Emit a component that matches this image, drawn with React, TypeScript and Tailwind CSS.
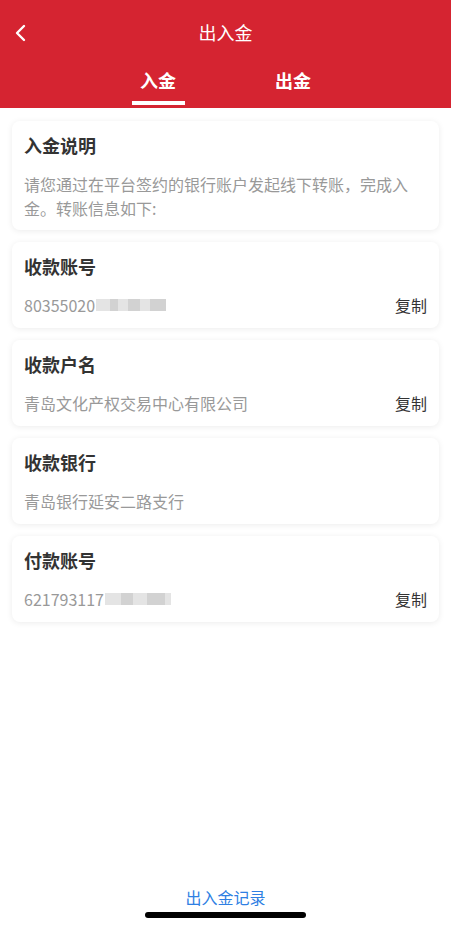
import React from 'react';

const Masked = ({ widths }: { widths: number[] }) => (
  <span className="inline-flex items-center h-[14px] ml-[1px]">
    {widths.map((w, i) => (
      <span
        key={i}
        className={i % 2 === 0 ? 'h-[12px] bg-[#e4e4e4]' : 'h-[12px] bg-[#d2d2d2]'}
        style={{ width: w }}
      />
    ))}
  </span>
);

const InfoCard = ({
  title,
  value,
  copy,
  mask,
}: {
  title: string;
  value: string;
  copy?: boolean;
  mask?: number[];
}) => (
  <div className="bg-white rounded-lg shadow-[0_1px_6px_rgba(0,0,0,0.08)] px-3 pt-[13px] pb-[12px]">
    <div className="text-[18px] leading-[22px] font-bold text-[#333]">{title}</div>
    <div className="mt-[17px] flex items-center justify-between">
      <div className="flex items-center text-[16px] leading-[22px] text-[#999]">
        {value}
        {mask && <Masked widths={mask} />}
      </div>
      {copy && <span className="text-[16px] leading-[22px] text-[#333]">复制</span>}
    </div>
  </div>
);

export default function App() {
  return (
    <div
      className="w-[451px] h-[927px] bg-white relative flex flex-col"
      style={{ fontFamily: '"PingFang SC", "Noto Sans CJK SC", sans-serif' }}
    >
      {/* Header */}
      <div className="bg-[#d52431] h-[108px] flex flex-col">
        <div className="h-[64px] flex items-center relative">
          <svg className="ml-[14px] mt-[1px]" width="14" height="18" viewBox="0 0 14 18" fill="none">
            <path d="M10 2 L3 9 L10 16" stroke="white" strokeWidth="2.4" strokeLinecap="round" strokeLinejoin="round" />
          </svg>
          <div className="absolute inset-x-0 text-center text-white text-[18px] leading-[24px]">出入金</div>
        </div>
        <div className="mt-[4px] flex justify-center gap-[82px] text-white text-[18px] font-bold leading-[24px]">
          <div className="flex flex-col items-center w-[53px]">
            <span>入金</span>
            <span className="mt-[9px] h-[4px] w-[53px] bg-white" />
          </div>
          <div className="w-[53px] text-center">出金</div>
        </div>
      </div>

      {/* Content */}
      <div className="px-3 pt-[13px] flex flex-col gap-3">
        <div className="bg-white rounded-lg shadow-[0_1px_6px_rgba(0,0,0,0.08)] px-3 pt-[12px] pb-[10px]">
          <div className="text-[18px] leading-[24px] font-bold text-[#333]">入金说明</div>
          <div className="mt-[15px] text-[16px] leading-[24px] text-[#999]">
            请您通过在平台签约的银行账户发起线下转账，完成入金。转账信息如下:
          </div>
        </div>
        <InfoCard title="收款账号" value="80355020" copy mask={[14, 8, 10, 12, 10, 16]} />
        <InfoCard title="收款户名" value="青岛文化产权交易中心有限公司" copy />
        <InfoCard title="收款银行" value="青岛银行延安二路支行" />
        <InfoCard title="付款账号" value="621793117" copy mask={[16, 12, 14, 18, 6]} />
      </div>

      {/* Footer */}
      <div className="mt-auto flex flex-col items-center pb-[9px]">
        <div className="text-[16px] leading-[22px] text-[#2f7fe3]">出入金记录</div>
        <div className="mt-[4px] w-[161px] h-[6px] rounded-full bg-black" />
      </div>
    </div>
  );
}
